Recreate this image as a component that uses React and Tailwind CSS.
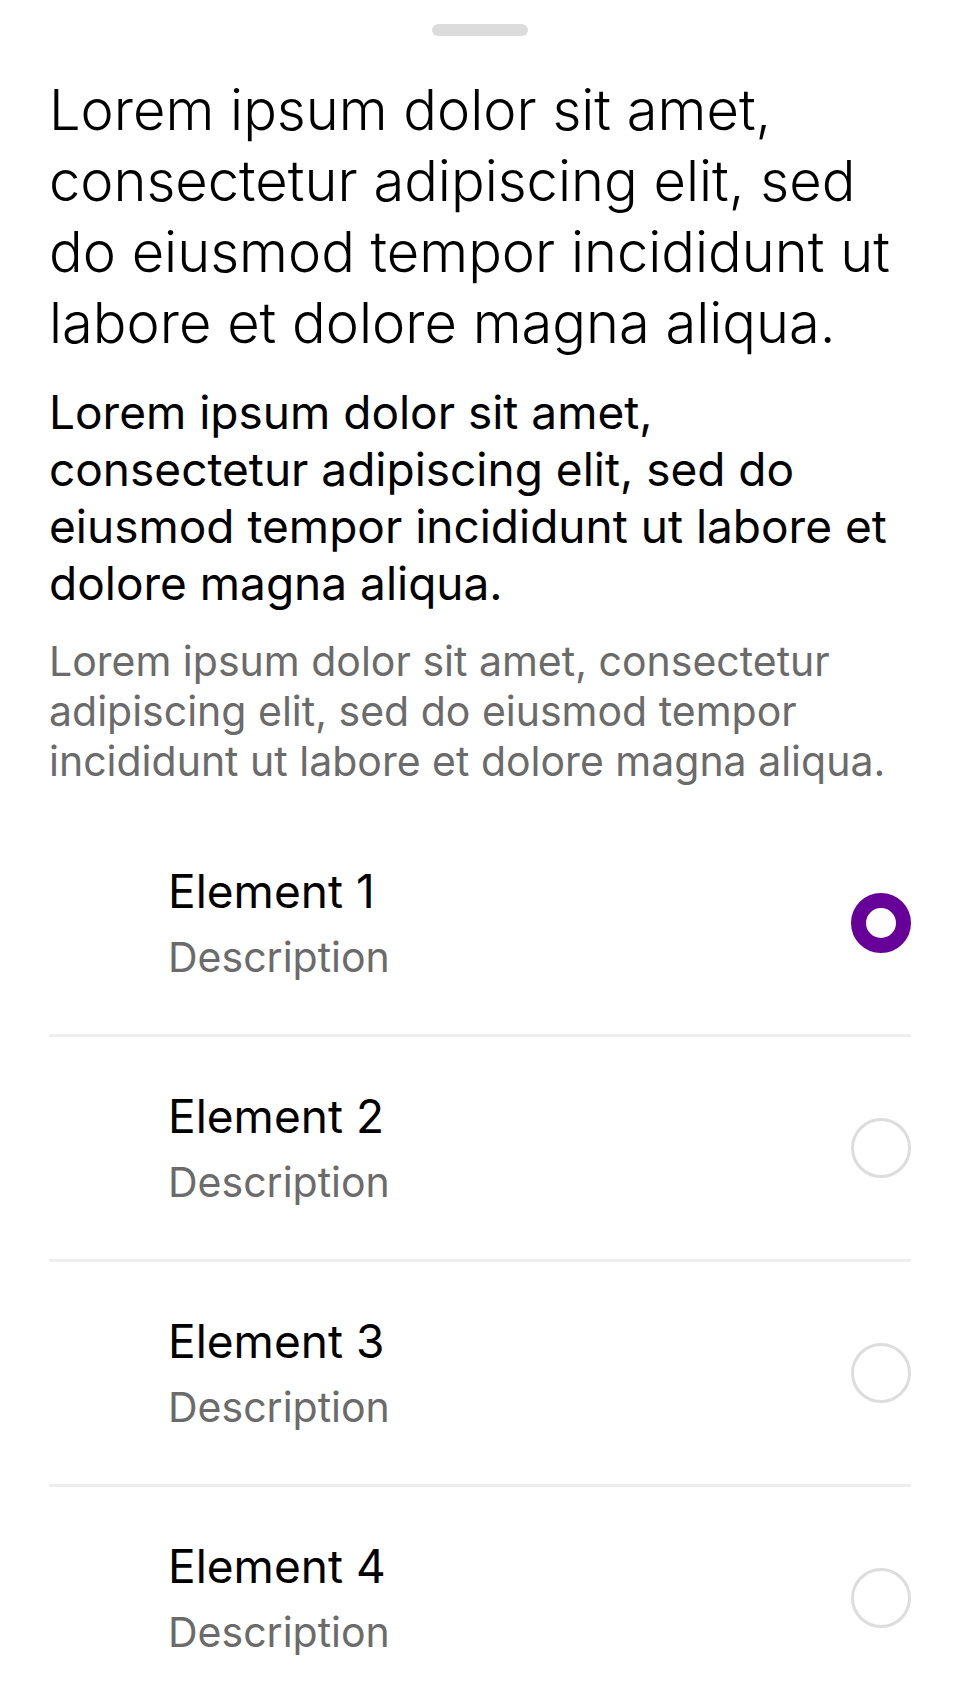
import { useState } from "react";

const items = [
  { id: 1, title: "Element 1", description: "Description" },
  { id: 2, title: "Element 2", description: "Description" },
  { id: 3, title: "Element 3", description: "Description" },
  { id: 4, title: "Element 4", description: "Description" }
];

const lorem =
  "Lorem ipsum dolor sit amet, consectetur adipiscing elit, sed do eiusmod tempor incididunt ut labore et dolore magna aliqua.";

function App() {
  const [selected, setSelected] = useState(1);

  return (
    <div className="min-h-[1704px] bg-white font-['Inter','Liberation_Sans',sans-serif] text-black">
      <div className="flex justify-center pt-[24px]">
        <div className="h-[12px] w-[96px] rounded-full bg-[#dcdcdc]" />
      </div>

      <div className="px-[49px]">
        <h1 className="mt-[39px] text-[56px] font-light leading-[71px]">{lorem}</h1>
        <p className="mt-[25px] text-[46px] leading-[57px]">{lorem}</p>
        <p className="mt-[24px] text-[41px] leading-[50px] text-[#6b6b6b]">{lorem}</p>

        <div className="mt-[26px]">
          {items.map((item) => (
            <Row
              key={item.id}
              item={item}
              checked={selected === item.id}
              onSelect={() => setSelected(item.id)}
            />
          ))}
        </div>
      </div>
    </div>
  );
}

function Row({ item, checked, onSelect }) {
  return (
    <button
      onClick={onSelect}
      className="flex h-[225px] w-full items-center justify-between border-b-[3px] border-[#eeeeee] text-left"
    >
      <div className="pl-[119px]">
        <p className="text-[46px] leading-[56px]">{item.title}</p>
        <p className="mt-[12px] text-[41px] leading-[52px] text-[#6b6b6b]">{item.description}</p>
      </div>
      <Radio checked={checked} />
    </button>
  );
}

function Radio({ checked }) {
  if (checked) {
    return <span className="block h-[60px] w-[60px] rounded-full border-[15px] border-[#660099]" />;
  }
  return <span className="block h-[60px] w-[60px] rounded-full border-[3px] border-[#dddddd]" />;
}

export default App;
